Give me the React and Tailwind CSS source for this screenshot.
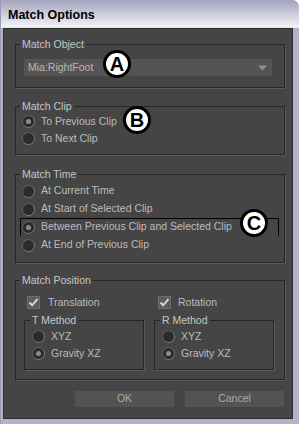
import React from "react";

const FONT = { fontFamily: '"Liberation Sans", Arial, sans-serif' };

function Radio({ checked }) {
  return (
    <div className="w-[13px] h-[13px] shrink-0 rounded-full border border-[#5f5f5f] border-r-[#7a7a7a] border-b-[#7a7a7a] bg-[#2b2b2b] flex items-center justify-center">
      {checked && <div className="w-[5px] h-[5px] rounded-full bg-[#8c8c8c]" />}
    </div>
  );
}

function Checkbox() {
  return (
    <div className="w-[13px] h-[13px] shrink-0 bg-[#5c5c5c] border border-[#6e6e6e] flex items-center justify-center">
      <svg width="11" height="11" viewBox="0 0 11 11">
        <path d="M1.5 5.5 L4.2 8.3 L9.5 2" fill="none" stroke="#d4d4d4" strokeWidth="2" />
      </svg>
    </div>
  );
}

function Group({ title, children, className = "", sub = false }) {
  return (
    <fieldset
      className={`border border-[#262626] shadow-[1px_1px_0_#5a5a5a] min-w-0 ${className}`}
    >
      <legend
        className={`${sub ? "ml-[5px]" : "ml-[4px]"} px-[2px] text-[10.5px] leading-[13px] text-[#c6c6c6]`}
      >
        {title}
      </legend>
      {children}
    </fieldset>
  );
}

function RadioRow({ label, checked, focus, height = "h-[17px]" }) {
  return (
    <div
      className={`${height} ml-[4px] mr-[5px] pl-[1px] flex items-center gap-[6px] border ${
        focus ? "border-black border-b-transparent" : "border-transparent"
      }`}
    >
      <Radio checked={checked} />
      <span className="text-[10.5px] text-[#bcbcbc] whitespace-nowrap">{label}</span>
    </div>
  );
}

function SubRadio({ label, checked }) {
  return (
    <div className="h-[17px] pl-[7px] flex items-center gap-[6px]">
      <Radio checked={checked} />
      <span className="text-[10.5px] text-[#bcbcbc]">{label}</span>
    </div>
  );
}

function Marker({ letter, className }) {
  return (
    <div
      className={`absolute w-[28px] h-[28px] rounded-full bg-white border-[3px] border-black flex items-center justify-center text-[20px] font-bold text-black leading-none ${className}`}
    >
      {letter}
    </div>
  );
}

export default function App() {
  return (
    <div
      className="relative w-[299px] h-[424px] bg-white overflow-hidden"
      style={FONT}
    >
      <div className="w-full h-full flex flex-col bg-[#b2b2ca] rounded-tr-[7px] border-l border-[#9a9ab4]">
        <div className="h-[28px] shrink-0 rounded-tr-[7px] bg-gradient-to-b from-[#a3a3bd] via-[#cacadb] to-[#f3f3f8] border-b border-[#e6e6ee] flex items-center pl-[7px] pt-[3px]">
          <span className="text-[12.5px] font-bold text-black">Match Options</span>
        </div>

        <div className="flex-1 ml-[2px] mr-[6px] mb-[5px] bg-[#454545] border border-[#2e2e2e] pt-[9px] pl-[11px] pr-[7px] flex flex-col">
          <Group title="Match Object">
            <div className="pt-[8px] pb-[11px] pl-[8px] pr-[12px]">
              <div className="h-[17px] bg-[#545454] flex items-center justify-between pl-[4px] pr-[5px]">
                <span className="text-[10.5px] text-[#b8b8b8]">Mia:RightFoot</span>
                <svg width="9" height="6" viewBox="0 0 9 6">
                  <path d="M1 1 H8 L4.5 5 Z" fill="#8a8a8a" stroke="#a0a0a0" strokeWidth="0.8" />
                </svg>
              </div>
            </div>
          </Group>

          <Group title="Match Clip" className="mt-[12px]">
            <div className="pb-[7px]">
              <RadioRow label="To Previous Clip" checked />
              <RadioRow label="To Next Clip" />
            </div>
          </Group>

          <Group title="Match Time" className="mt-[13px]">
            <div className="pt-[1px] pb-[8px]">
              <RadioRow height="h-[18px]" label="At Current Time" />
              <RadioRow height="h-[18px]" label="At Start of Selected Clip" />
              <RadioRow height="h-[18px]" label="Between Previous Clip and Selected Clip" checked focus />
              <RadioRow height="h-[18px]" label="At End of Previous Clip" />
            </div>
          </Group>

          <Group title="Match Position" className="mt-[11px]">
            <div className="pt-[9px] pb-[9px] pl-[8px] pr-[10px] grid grid-cols-2 gap-x-[10px]">
              <div className="flex flex-col">
                <div className="h-[13px] pl-[3px] flex items-center gap-[8px]">
                  <Checkbox />
                  <span className="text-[10.5px] text-[#bcbcbc]">Translation</span>
                </div>
                <Group title="T Method" sub className="mt-[5px]">
                  <div className="pt-[1px] pb-[7px]">
                    <SubRadio label="XYZ" />
                    <SubRadio label="Gravity XZ" checked />
                  </div>
                </Group>
              </div>
              <div className="flex flex-col">
                <div className="h-[13px] pl-[4px] flex items-center gap-[7px]">
                  <Checkbox />
                  <span className="text-[10.5px] text-[#bcbcbc]">Rotation</span>
                </div>
                <Group title="R Method" sub className="mt-[5px]">
                  <div className="pt-[1px] pb-[7px]">
                    <SubRadio label="XYZ" />
                    <SubRadio label="Gravity XZ" checked />
                  </div>
                </Group>
              </div>
            </div>
          </Group>

          <div className="mt-[11px] flex justify-end gap-[11px] mr-[1px]">
            <button className="w-[99px] h-[16px] bg-[#535353] text-[10.5px] text-[#ababab]">OK</button>
            <button className="w-[99px] h-[16px] bg-[#535353] text-[10.5px] text-[#ababab]">Cancel</button>
          </div>
        </div>
      </div>

      <Marker letter="A" className="left-[103px] top-[50px]" />
      <Marker letter="B" className="left-[123px] top-[106px]" />
      <Marker letter="C" className="left-[240px] top-[209px]" />
    </div>
  );
}
